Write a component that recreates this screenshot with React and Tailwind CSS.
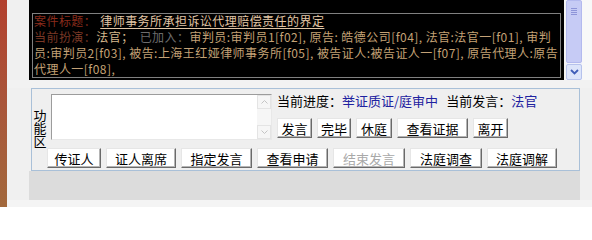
import React from "react";

const Btn = ({ w, children, disabled }) => (
  <div
    className={`${w} h-[20px] flex items-center justify-center bg-white border border-t-[#e6e6e6] border-l-[#e6e6e6] border-r-[#6a6a6a] border-b-[#6a6a6a] shadow-[inset_-1px_-1px_0_#b4b4b4] text-[13px] leading-none ${
      disabled ? "text-[#a8a8a8]" : "text-black"
    }`}
  >
    {children}
  </div>
);

const App = () => {
  return (
    <div className="w-[592px] h-[207px] flex overflow-hidden bg-[#f4f4f4] font-['Noto_Sans_CJK_SC',sans-serif]">
      {/* left edge of the neighbour window */}
      <div className="w-[7px] h-full bg-gradient-to-b from-[#b2402e] via-[#a9553a] to-[#a2683c]" />

      <div className="flex-1 flex flex-col bg-[#f0f0f0]">
        {/* top: info board */}
        <div className="h-[80px] flex">
          <div className="w-[22px]" />
          <div className="w-[535px] h-full bg-black pt-[13px] px-[3px] pb-[2px]">
            <div className="h-full border border-[#808080] px-[1px] text-[12px] leading-[16px] tracking-[0.45px] whitespace-nowrap overflow-hidden">
              <div className="-mt-[1px]">
                <span className="text-[#8a2c1c]">案件标题：</span>
                <span className="ml-[4px] text-[#e2c6a6] underline underline-offset-2">
                  律师事务所承担诉讼代理赔偿责任的界定
                </span>
              </div>
              <div>
                <span className="text-[#7a3826]">当前扮演：</span>
                <span className="text-[#d6b88c]">法官；</span>
                <span className="ml-[6px] text-[#6c6c6c]">已加入：</span>
                <span className="text-[#c4a276]">
                  审判员:审判员1[f02], 原告: 皓德公司[f04], 法官:法官一[f01], 审判
                </span>
              </div>
              <div className="text-[#c4a276]">
                员:审判员2[f03], 被告:上海王红娅律师事务所[f05], 被告证人:被告证人一[f07], 原告代理人:原告
              </div>
              <div className="text-[#c4a276]">代理人一[f08],</div>
            </div>
          </div>
          <div className="w-[2px] bg-[#f4f4f4]" />
          {/* scrollbar */}
          <div className="w-[16px] h-full flex flex-col bg-[#eef0fb]">
            <div className="h-[63px] bg-[#c6cbf5] border border-[#b3b9ee] rounded-[2px] flex flex-col items-center pt-[7px] gap-[1px]">
              <div className="w-[6px] h-px bg-[#8d94d8]" />
              <div className="w-[6px] h-px bg-[#8d94d8]" />
              <div className="w-[6px] h-px bg-[#8d94d8]" />
              <div className="w-[6px] h-px bg-[#8d94d8]" />
            </div>
            <div className="h-[16px] mt-[1px] bg-[#dce4fa] border border-[#b6c2ec] rounded-[2px] flex items-center justify-center">
              <svg width="9" height="6" viewBox="0 0 9 6">
                <path d="M1 1 L4.5 4.5 L8 1" fill="none" stroke="#3f5db8" strokeWidth="1.8" />
              </svg>
            </div>
          </div>
          <div className="flex-1 bg-[#f8f8f8]" />
        </div>

        <div className="h-[8px] bg-[#f2f2f2]" />

        {/* function area */}
        <div className="flex">
          <div className="w-[24px]" />
          <div className="w-[549px] h-[83px] border border-[#a9c0d8] bg-[#efefef] flex">
            <div className="w-[15px] pt-[20px] flex justify-center">
              <div className="[writing-mode:vertical-lr] text-[13px] leading-[14px] text-black">
                功能区
              </div>
            </div>
            <div className="flex flex-col">
              <div className="flex pt-[5px] h-[58px]">
                <div className="ml-[4px] w-[221px] h-[46px] bg-white border border-t-[#9c9c9c] border-l-[#9c9c9c] border-r-[#e8e8e8] border-b-[#e8e8e8] flex justify-end">
                  <div className="w-[14px] h-full bg-[#f6f6f6] flex flex-col justify-between">
                    <div className="h-[14px] flex items-center justify-center border border-[#e4e4e4]">
                      <svg width="7" height="4" viewBox="0 0 7 4">
                        <path d="M0.5 3.5 L3.5 0.5 L6.5 3.5" fill="none" stroke="#c4c4c4" strokeWidth="1" />
                      </svg>
                    </div>
                    <div className="h-[14px] flex items-center justify-center border border-[#e4e4e4]">
                      <svg width="7" height="4" viewBox="0 0 7 4">
                        <path d="M0.5 0.5 L3.5 3.5 L6.5 0.5" fill="none" stroke="#c4c4c4" strokeWidth="1" />
                      </svg>
                    </div>
                  </div>
                </div>
                <div className="ml-[5px] flex flex-col">
                  <div className="h-[16px] mt-[-1px] text-[13px] leading-[16px] whitespace-nowrap text-black">
                    当前进度：<span className="text-[#1e22a0]">举证质证/庭审中</span>
                    <span className="ml-[8px]">当前发言：</span>
                    <span className="text-[#1e22a0]">法官</span>
                  </div>
                  <div className="flex gap-[5px] mt-[9px]">
                    <Btn w="w-[35px]">发言</Btn>
                    <Btn w="w-[34px]">完毕</Btn>
                    <Btn w="w-[36px]">休庭</Btn>
                    <Btn w="w-[71px]">查看证据</Btn>
                    <Btn w="w-[35px]">离开</Btn>
                  </div>
                </div>
              </div>
              <div className="flex gap-[5px] mt-[1px]">
                <Btn w="w-[54px]">传证人</Btn>
                <Btn w="w-[70px]">证人离席</Btn>
                <Btn w="w-[71px]">指定发言</Btn>
                <Btn w="w-[71px]">查看申请</Btn>
                <Btn w="w-[72px]" disabled>
                  结束发言
                </Btn>
                <Btn w="w-[72px]">法庭调查</Btn>
                <Btn w="w-[70px]">法庭调解</Btn>
              </div>
            </div>
          </div>
        </div>

        {/* status band */}
        <div className="flex">
          <div className="w-[22px]" />
          <div className="w-[551px] h-[29px] bg-[#dcdcdc]" />
        </div>
        <div className="flex-1 bg-[#f4f4f4]" />
      </div>
    </div>
  );
};

export default App;
